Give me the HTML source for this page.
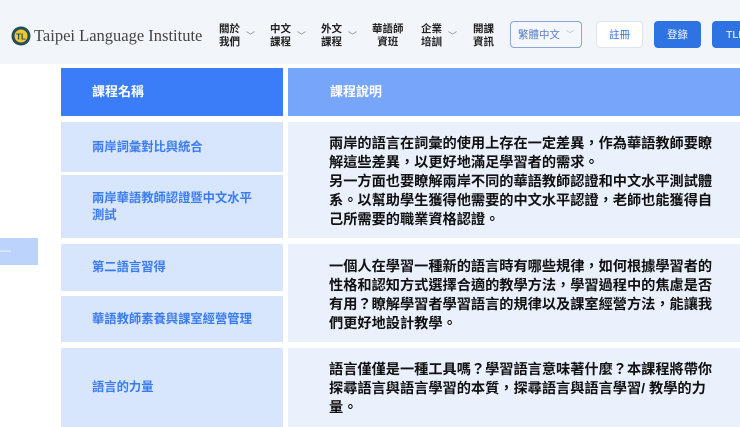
<!DOCTYPE html>
<html><head><meta charset="utf-8"><style>
*{margin:0;padding:0;box-sizing:border-box}
body{width:740px;height:427px;overflow:hidden;background:#fff;font-family:"Liberation Sans","Noto Sans CJK TC",sans-serif;position:relative}
.a{position:absolute}
.hdr{left:0;top:0;width:740px;height:64px;background:#f2f5fa}
.nav{font-size:10.5px;font-weight:bold;color:#222;line-height:13px}
.chev{font-size:9px;color:#888;font-weight:normal}
.lc{background:#d7e6fd;color:#3a7bef;font-weight:bold;font-size:12.3px;display:flex;align-items:center;padding-left:31px;left:61px;width:222px;line-height:17px}
.rc{background:#eaf1fd;left:288px;width:452px;padding-left:41px;color:#111;font-weight:bold;font-size:14.2px;line-height:19px;display:flex;align-items:center;padding-top:4px}
.btn{top:21px;height:27px;border-radius:4px;font-size:10.5px;display:flex;align-items:center;justify-content:center}
</style></head><body>
<div class="a hdr"></div>
<svg class="a" style="left:11px;top:26px" width="20" height="20" viewBox="0 0 20 20"><circle cx="10" cy="10" r="9.5" fill="#1f4f5a"/><circle cx="10" cy="10" r="6.5" fill="#f2c72e"/><text x="10" y="13.5" font-size="8" font-weight="bold" text-anchor="middle" fill="#1f4f5a" font-family="Liberation Sans">TL</text></svg>
<div class="a" style="left:34px;top:26px;font-family:'Liberation Serif',serif;font-size:16.5px;color:#444">Taipei Language Institute</div>
<div class="a nav" style="left:219px;top:23px">關於<br>我們</div><div class="a chev" style="left:246px;top:29px">﹀</div>
<div class="a nav" style="left:270px;top:23px">中文<br>課程</div><div class="a chev" style="left:297px;top:29px">﹀</div>
<div class="a nav" style="left:321px;top:23px">外文<br>課程</div><div class="a chev" style="left:348px;top:29px">﹀</div>
<div class="a nav" style="left:372px;top:23px;text-align:center">華語師<br>資班</div>
<div class="a nav" style="left:421px;top:23px">企業<br>培訓</div><div class="a chev" style="left:448px;top:29px">﹀</div>
<div class="a nav" style="left:473px;top:23px">開課<br>資訊</div>
<div class="a btn" style="left:510px;width:72px;border:1px solid #8aa4d6;color:#5a7fc6;background:#f4f7fd">繁體中文 <span style="font-size:8px;color:#aab;margin-left:6px">﹀</span></div>
<div class="a btn" style="left:596px;width:47px;border:1px solid #dfe5f0;background:#fff;color:#3a6fd8">註冊</div>
<div class="a btn" style="left:654px;width:47px;background:#2f72e2;color:#fff">登錄</div>
<div class="a btn" style="left:712px;width:40px;background:#2f72e2;color:#fff;justify-content:flex-start;padding-left:14px">TLI</div>

<div class="a" style="left:61px;top:68px;width:222px;height:48px;background:#3b7df8;color:#fff;font-weight:bold;font-size:13px;padding-left:31px;line-height:48px">課程名稱</div>
<div class="a" style="left:288px;top:68px;width:452px;height:48px;background:#77a5fa;color:#fff;font-weight:bold;font-size:13px;padding-left:42px;line-height:48px">課程說明</div>

<div class="a lc" style="top:122px;height:50px">兩岸詞彙對比與統合</div>
<div class="a lc" style="top:175px;height:63px">兩岸華語教師認證暨中文水平<br>測試</div>
<div class="a lc" style="top:244px;height:47px">第二語言習得</div>
<div class="a lc" style="top:296px;height:46px">華語教師素養與課室經營管理</div>
<div class="a lc" style="top:348px;height:79px">語言的力量</div>

<div class="a rc" style="top:122px;height:116px">兩岸的語言在詞彙的使用上存在一定差異，作為華語教師要瞭<br>解這些差異，以更好地滿足學習者的需求。<br>另一方面也要瞭解兩岸不同的華語教師認證和中文水平測試體<br>系。以幫助學生獲得他需要的中文水平認證，老師也能獲得自<br>己所需要的職業資格認證。</div>
<div class="a rc" style="top:244px;height:98px;padding-top:6px">一個人在學習一種新的語言時有哪些規律，如何根據學習者的<br>性格和認知方式選擇合適的教學方法，學習過程中的焦慮是否<br>有用？瞭解學習者學習語言的規律以及課室經營方法，能讓我<br>們更好地設計教學。</div>
<div class="a rc" style="top:348px;height:79px;align-items:flex-start;padding-top:13px">語言僅僅是一種工具嗎？學習語言意味著什麼？本課程將帶你<br>探尋語言與語言學習的本質，探尋語言與語言學習/ 教學的力<br>量。</div>

<div class="a" style="left:0;top:238px;width:38px;height:27px;background:#bcd3fb;color:#fff;font-size:11px;line-height:27px">—</div>
</body></html>
